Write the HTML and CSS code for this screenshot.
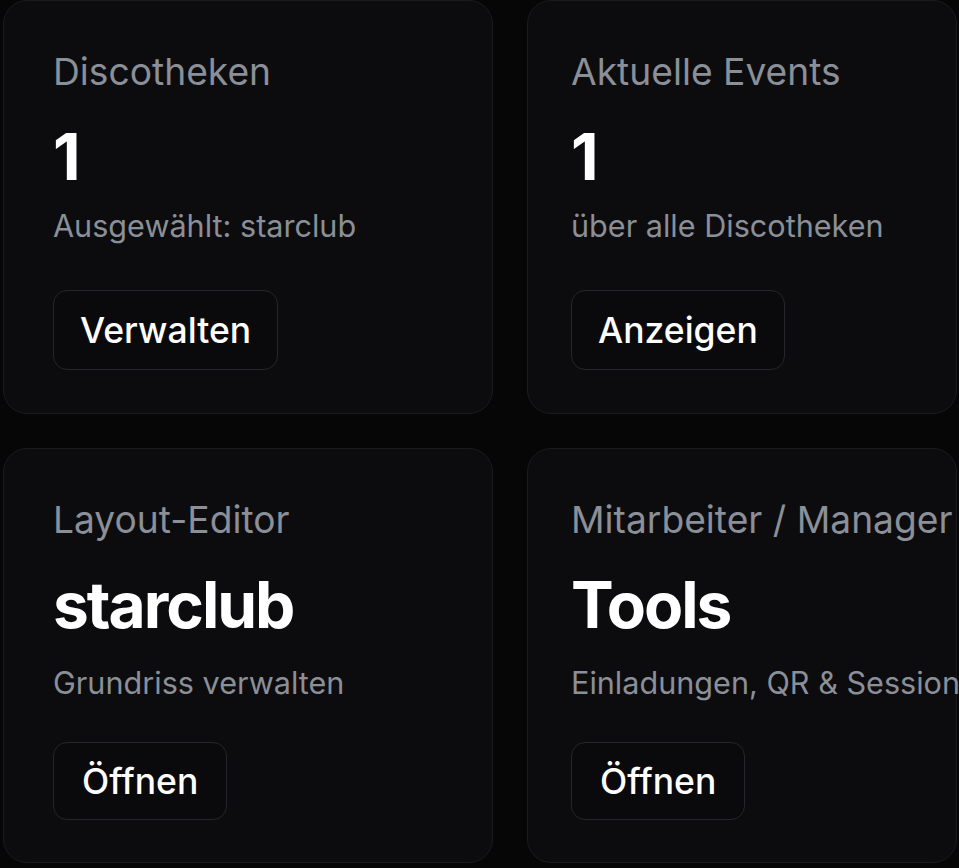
FILE: index.html
```html
<!DOCTYPE html>
<html lang="de">

<head>
    <meta charset="UTF-8">
    <meta name="viewport" content="width=device-width, initial-scale=1.0">
    <title>Dashboard</title>
    <link rel="stylesheet" href="styles.css">
</head>

<body>
    <main class="dashboard">
        <!-- Discotheken -->
        <section class="card">
            <h2 class="card-title">Discotheken</h2>
            <div class="card-value">1</div>
            <p class="card-sub">Ausgewählt: starclub</p>
            <button class="card-btn">Verwalten</button>
        </section>

        <!-- Events -->
        <section class="card">
            <h2 class="card-title">Aktuelle Events</h2>
            <div class="card-value">1</div>
            <p class="card-sub">über alle Discotheken</p>
            <button class="card-btn">Anzeigen</button>
        </section>

        <!-- Layout -->
        <section class="card card--link">
            <h2 class="card-title">Layout-Editor</h2>
            <div class="card-value">starclub</div>
            <p class="card-sub">Grundriss verwalten</p>
            <button class="card-btn">Öffnen</button>
        </section>

        <!-- Staff -->
        <section class="card card--link">
            <h2 class="card-title">Mitarbeiter / Manager</h2>
            <div class="card-value">Tools</div>
            <p class="card-sub">Einladungen, QR &amp; Session</p>
            <button class="card-btn">Öffnen</button>
        </section>
    </main>
</body>

</html>
```

FILE: styles.css
```css
:root {
    --page-bg: #060607;
    --card-bg: #0c0c0e;
    --card-border: #1b1b1e;
    --muted: #8a8f98;
    --btn-bg: #0a0a0c;
    --btn-border: #26262a;
}

html,
body {
    height: 100%;
}

body {
    margin: 0;
    overflow: hidden;
    background-color: var(--page-bg);
    font-family: "Inter", "Noto Sans", sans-serif;
    color: #fff;
}

.dashboard {
    display: grid;
    grid-template-columns: 490px 430px;
    gap: 34px;
    padding-left: 3px;
}

.card {
    display: flex;
    flex-direction: column;
    align-items: flex-start;
    padding: 48px 49px 43px;
    background-color: var(--card-bg);
    border: 1px solid var(--card-border);
    border-radius: 24px;
    white-space: nowrap;
}

/* right column sits a bit tighter */
.card:nth-child(even) {
    padding-left: 43px;
}

.card-title {
    margin: 0;
    font-size: 37.2px;
    line-height: 45px;
    font-weight: 400;
    color: var(--muted);
}

.card-value {
    margin-top: 31px;
    font-size: 64px;
    line-height: 64px;
    font-weight: 700;
    letter-spacing: -2px;
}

.card-sub {
    margin: 17px 0 0;
    font-size: 30.6px;
    line-height: 39px;
    color: var(--muted);
}

.card-btn {
    margin-top: 45px;
    height: 80px;
    padding: 0 26px;
    background-color: var(--btn-bg);
    border: 1px solid var(--btn-border);
    border-radius: 14px;
    font-family: inherit;
    font-size: 35.5px;
    font-weight: 500;
    color: #fff;
}

/* link cards: text value, roomier subtitle */
.card--link {
    padding-bottom: 42px;
}

.card--link .card-sub {
    margin-top: 26px;
}

.card--link .card-btn {
    margin-top: 40px;
    height: 78px;
    padding: 0 28px;
}
```
